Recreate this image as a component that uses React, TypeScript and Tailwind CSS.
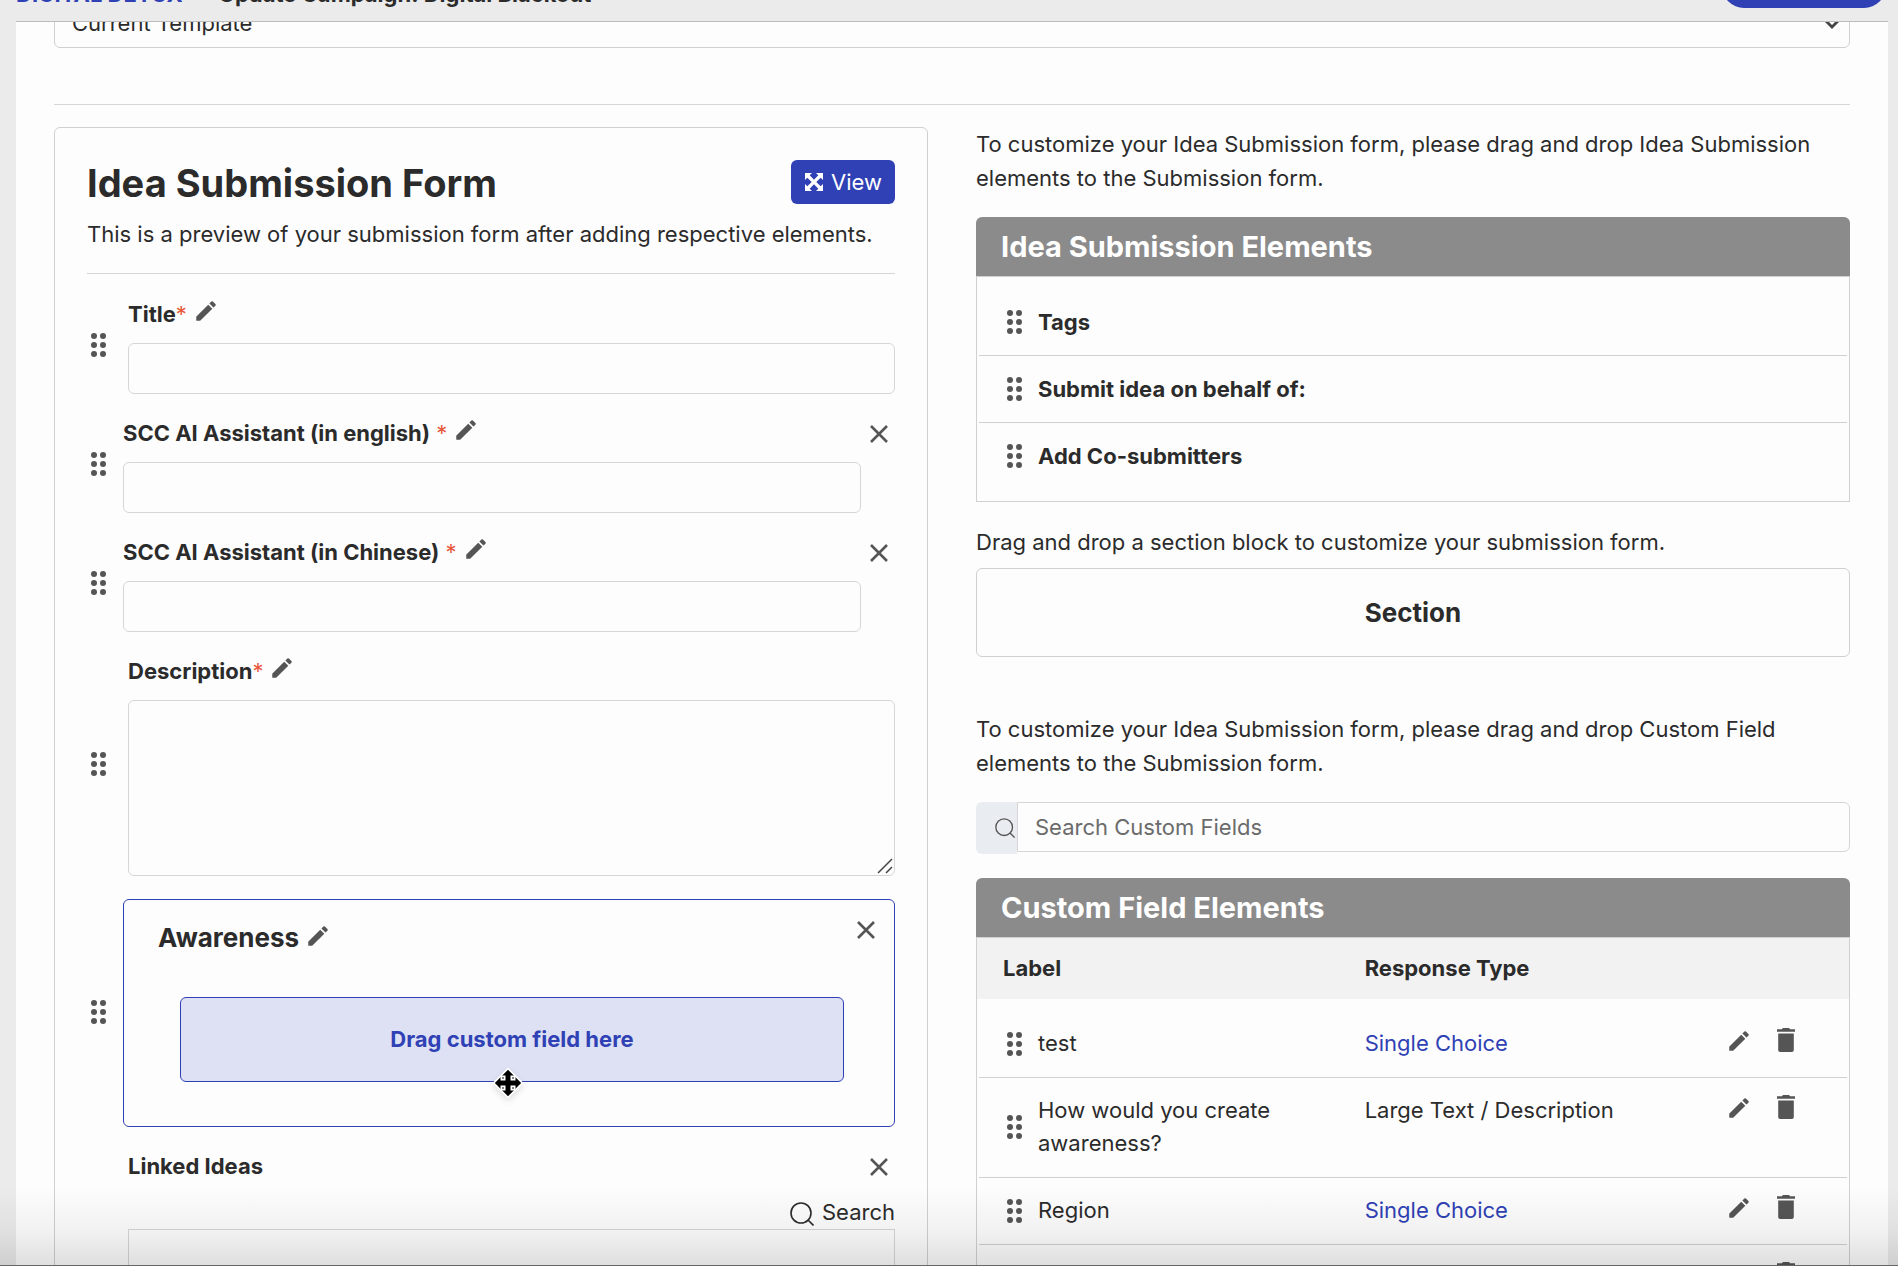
import React from 'react';
import { cva, type VariantProps } from 'class-variance-authority';
import { clsx } from 'clsx';

// Icons
const DragDots: React.FC<{ className?: string }> = ({ className }) => (
  <svg viewBox="0 0 15 24" fill="currentColor" className={clsx('h-6 w-[15px] shrink-0 text-[#555]', className)} aria-hidden="true">
    {[3, 12, 21].map((y) => (
      <React.Fragment key={y}>
        <circle cx="3" cy={y} r="3" />
        <circle cx="12" cy={y} r="3" />
      </React.Fragment>
    ))}
  </svg>
);

const PencilIcon = () => (
  <svg viewBox="0 0 24 24" fill="currentColor" className="size-[26px] text-[#555]" aria-hidden="true">
    <path d="M3 17.46v3.04c0 .28.22.5.5.5h3.04c.13 0 .26-.05.35-.15L17.81 9.94l-3.75-3.75L3.15 17.1c-.1.1-.15.22-.15.36z" />
    <path d="M20.71 7.04a1 1 0 0 0 0-1.41l-2.34-2.34a1 1 0 0 0-1.41 0l-1.83 1.83 3.75 3.75 1.83-1.83z" />
  </svg>
);

const TrashIcon = () => (
  <svg viewBox="0 0 18 24" fill="currentColor" className="h-6 w-[18px] text-[#555]" aria-hidden="true">
    <path d="M0 1.2h4.8L6 0h6l1.2 1.2H18v2.6H0z" />
    <path d="M1.2 5.6h15.6V22a2 2 0 0 1-2 2H3.2a2 2 0 0 1-2-2z" />
  </svg>
);

const CloseIcon = () => (
  <svg viewBox="0 0 24 24" fill="none" stroke="currentColor" strokeWidth="2.6" className="size-6 text-[#555]" aria-hidden="true">
    <path d="M4 4l16 16M20 4L4 20" />
  </svg>
);

const SearchIcon: React.FC<{ className?: string }> = ({ className }) => (
  <svg viewBox="0 0 24 24" fill="none" stroke="currentColor" strokeWidth="1.6" className={className} aria-hidden="true">
    <circle cx="11" cy="11" r="10" />
    <path d="M18 18l5.5 5.5" />
  </svg>
);

const ExpandIcon = () => (
  <svg viewBox="0 0 20 20" fill="currentColor" className="size-5" aria-hidden="true">
    <path d="M1 1h7L5.7 3.3 10 7.7l4.300-4.400L12 1h7v7l-2.300-2.300L12.300 10l4.400 4.300L19 12v7h-7l2.300-2.300L10 12.300l-4.300 4.400L8 19H1v-7l2.300 2.300L7.700 10 3.300 5.700 1 8z" />
  </svg>
);

const MoveCursor: React.FC<{ className?: string }> = ({ className }) => (
  <svg viewBox="0 0 32 32" className={clsx('size-8 drop-shadow-md', className)} aria-hidden="true">
    <path d="M16 0.500L31.500 16 16 31.500 0.500 16z" fill="#fff" />
    <path d="M16 2.800L29.200 16 16 29.200 2.800 16z" fill="#000" />
    {[8.5, 18.5].map((x) =>
      [8.5, 18.5].map((y) => (
        <React.Fragment key={`${x}-${y}`}>
          <rect x={x} y={y} width="5" height="5" fill="#fff" />
          <rect x={x + 1.6} y={y + 1.6} width="1.8" height="1.8" fill="#666" />
        </React.Fragment>
      ))
    )}
  </svg>
);

// Form controls
const fieldVariants = cva('block rounded-md border border-[#d6d6d6] bg-transparent px-4 text-[22px]', {
  variants: {
    kind: {
      input: 'h-[51px]',
      textarea: 'h-44 resize-none',
      list: 'h-48 resize-none rounded-none border-[#c4c4c4]',
    },
    inset: {
      true: 'w-[calc(100%-34px)]',
      false: 'w-full',
    },
  },
  defaultVariants: {
    kind: 'input',
    inset: false,
  },
});

const IconButton: React.FC<React.ButtonHTMLAttributes<HTMLButtonElement>> = ({ className, ...props }) => (
  <button type="button" className={clsx('flex shrink-0 items-center justify-center', className)} {...props} />
);

interface FormRowProps extends VariantProps<typeof fieldVariants> {
  id: string;
  label: string;
  required?: boolean;
  removable?: boolean;
  children: React.ReactNode;
}

const FormRow: React.FC<FormRowProps> = ({ id, label, required, removable, children }) => (
  <div className="flex items-center">
    <DragDots className="mr-[17px] mb-0.5 ml-1" />
    <div className={clsx('min-w-0 flex-1', !removable && 'pl-[5px]')}>
      <div className="mb-3 flex h-[34px] items-center justify-between">
        <div className="flex items-center">
          <label htmlFor={id} className="font-bold">
            {label}
            {required && (
              <span className="font-normal text-[#e8583a]">{removable ? ' *' : '*'}</span>
            )}
          </label>
          {required && (
            <IconButton aria-label={`Edit ${label}`} className="mb-1.5 ml-1.5">
              <PencilIcon />
            </IconButton>
          )}
        </div>
        {removable && (
          <IconButton aria-label={`Remove ${label}`} className="mr-1 pt-0.5">
            <CloseIcon />
          </IconButton>
        )}
      </div>
      {children}
    </div>
  </div>
);

// Right column panels
const PanelTitle: React.FC<{ children: React.ReactNode }> = ({ children }) => (
  <h2 className="rounded-t-md bg-[#8b8b8b] px-[25px] text-[29px] leading-[59px] font-bold text-white">
    {children}
  </h2>
);

const elements = ['Tags', 'Submit idea on behalf of:', 'Add Co-submitters'];

interface CustomField {
  label: string;
  type: string;
  linked?: boolean;
}

const customFields: CustomField[] = [
  { label: 'test', type: 'Single Choice', linked: true },
  { label: 'How would you create awareness?', type: 'Large Text / Description' },
  { label: 'Region', type: 'Single Choice', linked: true },
  { label: '', type: '' },
];

const rowGrid = 'mx-0.5 grid grid-cols-[59px_11fr_12fr_126px]';

const CustomFieldTable = () => (
  <table className="block border-x border-t border-[#d0d0d0]">
    <thead className="block bg-[#f2f2f2]">
      <tr className={rowGrid}>
        <th scope="col" className="col-span-2 pl-6 text-left leading-[61px] font-bold">Label</th>
        <th scope="col" className="text-left leading-[61px] font-bold">Response Type</th>
      </tr>
    </thead>
    <tbody className="block pt-3">
      {customFields.map((field, i) => (
        <tr key={i} className={clsx(rowGrid, 'border-b border-[#d0d0d0] pt-4 pb-[17px] leading-[33px]')}>
          <td className="flex items-center pl-7">
            <DragDots />
          </td>
          <td className="min-h-[33px] pr-8">{field.label}</td>
          <td>
            {field.linked ? <a href="#" className="text-[#2f41b5]">{field.type}</a> : field.type}
          </td>
          <td className="flex items-start gap-[25px] pl-[5px]">
            <IconButton aria-label={`Edit ${field.label}`} className="pt-px">
              <PencilIcon />
            </IconButton>
            <IconButton aria-label={`Delete ${field.label}`} className="pt-px">
              <TrashIcon />
            </IconButton>
          </td>
        </tr>
      ))}
    </tbody>
  </table>
);

const SubmissionForm = () => (
  <section className="rounded-md border border-[#d0d0d0] px-8 pt-8">
    <div className="flex items-start justify-between">
      <h1 className="text-[38px] leading-[46px] font-bold">Idea Submission Form</h1>
      <button type="button" className="flex h-11 items-center gap-[7px] rounded-md bg-[#2f41b5] px-[13px] text-white">
        <ExpandIcon />
        View
      </button>
    </div>
    <p className="mt-[11px] leading-[34px]">
      This is a preview of your submission form after adding respective elements.
    </p>
    <hr className="mt-[22px] mb-[23px] border-[#d6d6d6]" />

    <div className="flex flex-col gap-[22px]">
      <FormRow id="title" label="Title" required>
        <input id="title" type="text" className={fieldVariants()} />
      </FormRow>
      <FormRow id="assistant-en" label="SCC AI Assistant (in english)" required removable>
        <input id="assistant-en" type="text" className={fieldVariants({ inset: true })} />
      </FormRow>
      <FormRow id="assistant-zh" label="SCC AI Assistant (in Chinese)" required removable>
        <input id="assistant-zh" type="text" className={fieldVariants({ inset: true })} />
      </FormRow>
      <FormRow id="description" label="Description" required>
        <div className="relative">
          <textarea id="description" className={fieldVariants({ kind: 'textarea' })} />
          <svg viewBox="0 0 16 16" fill="none" stroke="#444" strokeWidth="1.5" className="pointer-events-none absolute right-0.5 bottom-0.5 size-4" aria-hidden="true">
            <path d="M1 15L15 1M9 15l6-6" />
          </svg>
        </div>
      </FormRow>

      <div className="flex items-center pt-px">
        <DragDots className="mr-[17px] mb-0.5 ml-1" />
        <div className="flex-1 rounded-md border border-[#2f41b5] pt-4 pr-4 pb-11 pl-[34px]">
          <div className="flex items-start justify-between">
            <div className="flex items-center pt-1">
              <h3 className="text-[26px] leading-9 font-bold">Awareness</h3>
              <IconButton aria-label="Edit Awareness" className="mb-1 ml-1.5">
                <PencilIcon />
              </IconButton>
            </div>
            <IconButton aria-label="Remove Awareness" className="pt-0.5">
              <CloseIcon />
            </IconButton>
          </div>
          <div className="relative mt-[41px] mr-[34px] ml-[22px] rounded-md border border-[#2f41b5] bg-[#dee1f3] text-center leading-[83px] font-bold text-[#2f41b5]">
            Drag custom field here
            <MoveCursor className="absolute -bottom-[18px] left-[47%]" />
          </div>
        </div>
      </div>

      <div className="pl-[41px]">
        <div className="flex h-[34px] items-center justify-between">
          <label htmlFor="linked-ideas" className="font-bold">Linked Ideas</label>
          <IconButton aria-label="Remove Linked Ideas" className="mr-1 pt-0.5">
            <CloseIcon />
          </IconButton>
        </div>
        <div className="mt-3 flex justify-end">
          <button type="button" className="flex items-center gap-2 leading-[34px]">
            <SearchIcon className="mt-1 size-6" />
            Search
          </button>
        </div>
        <textarea id="linked-ideas" className={fieldVariants({ kind: 'list' })} />
      </div>
    </div>
  </section>
);

const ElementsColumn = () => (
  <section className="leading-[34px]">
    <p>
      To customize your Idea Submission form, please drag and drop Idea Submission elements to the
      Submission form.
    </p>
    <div className="mt-[22px]">
      <PanelTitle>Idea Submission Elements</PanelTitle>
      <ul className="border border-[#d0d0d0] px-0.5 py-3">
        {elements.map((name) => (
          <li key={name} className="flex items-center gap-4 border-b border-[#d0d0d0] px-7 py-4 font-bold last:border-b-0">
            <DragDots />
            {name}
          </li>
        ))}
      </ul>
    </div>
    <p className="mt-[23px]">Drag and drop a section block to customize your submission form.</p>
    <div className="mt-[9px] rounded-md border border-[#d0d0d0] text-center text-[26px] leading-[87px] font-bold">
      Section
    </div>
    <p className="mt-[55px]">
      To customize your Idea Submission form, please drag and drop Custom Field elements to the
      Submission form.
    </p>
    <div className="mt-[22px] flex items-start">
      <label htmlFor="field-search" className="flex h-[52px] w-[41px] items-center justify-end rounded-l-md bg-[#e9ecf1] pr-0.5" aria-label="Search Custom Fields">
        <SearchIcon className="size-5 text-[#555]" />
      </label>
      <input
        id="field-search"
        type="search"
        placeholder="Search Custom Fields"
        className="h-[50px] min-w-0 flex-1 rounded-r-md border border-[#d6d6d6] px-[17px] placeholder:text-[#6b6b6b]"
      />
    </div>
    <div className="mt-6">
      <PanelTitle>Custom Field Elements</PanelTitle>
      <CustomFieldTable />
    </div>
  </section>
);

export default function App() {
  return (
    <div className="relative flex h-screen flex-col overflow-hidden bg-[#ebebeb] font-['Inter',sans-serif] text-[22px] text-[#2b2b2b]">
      <header className="z-10 -mt-[42px] flex h-16 shrink-0 items-end justify-between pr-3 pb-3.5 pl-4">
        <div className="flex items-center gap-9 leading-7 font-bold">
          <a href="#" className="text-[#2f41b5]">DIGITAL DETOX</a>
          <span>Update Campaign: Digital Blackout</span>
        </div>
        <button type="button" aria-label="Save" className="h-11 w-[164px] rounded-full bg-[#2f41b5]" />
      </header>

      <main className="mr-2.5 ml-4 -mt-px min-h-0 flex-1 overflow-hidden border-t border-[#bdbdbd] bg-[#fdfdfd]">
        <div className="-mt-6 px-[38px]">
          <div className="relative">
            <select aria-label="Template" className="block h-[50px] w-full appearance-none rounded-md border border-[#d0d0d0] bg-transparent px-[17px]">
              <option>Current Template</option>
            </select>
            <svg viewBox="0 0 20 12" fill="none" stroke="#444" strokeWidth="2.8" className="pointer-events-none absolute top-5 right-2 h-3 w-5" aria-hidden="true">
              <path d="M2 1l8 8 8-8" />
            </svg>
          </div>
          <hr className="mt-14 mb-[22px] border-[#d6d6d6]" />
          <div className="grid grid-cols-2 gap-12">
            <SubmissionForm />
            <ElementsColumn />
          </div>
        </div>
      </main>

      <div className="pointer-events-none absolute inset-x-0 bottom-0 h-20 border-b border-[#666] bg-linear-to-b from-transparent via-black/5 via-60% to-black/12" />
    </div>
  );
}
